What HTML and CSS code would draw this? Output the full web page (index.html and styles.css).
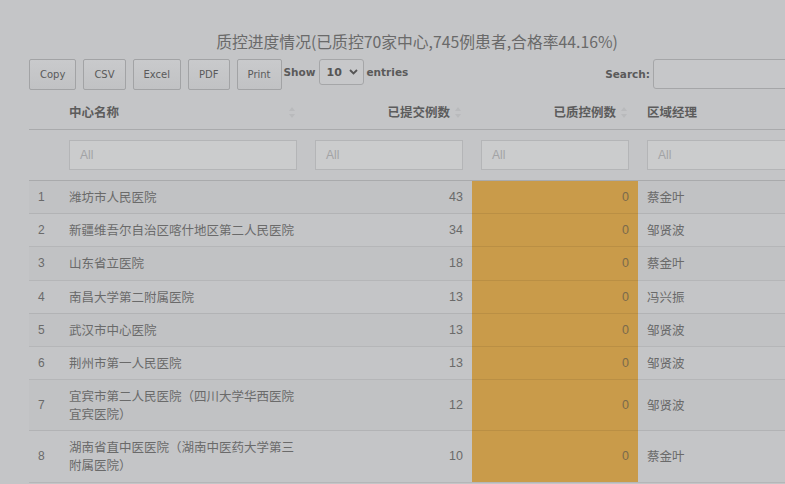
FILE: index.html
```html
<!DOCTYPE html>
<html lang="zh">
<head>
<meta charset="utf-8">
<title>质控进度情况</title>
<link rel="stylesheet" href="styles.css">
</head>
<body>
<div class="wrap">
  <h2 class="title">质控进度情况(已质控70家中心,745例患者,合格率44.16%)</h2>
  <div class="toolbar">
    <div class="buttons">
      <button class="btn">Copy</button>
      <button class="btn">CSV</button>
      <button class="btn">Excel</button>
      <button class="btn">PDF</button>
      <button class="btn">Print</button>
    </div>
    <div class="length">
      <span class="lbl">Show</span>
      <span class="select"><span class="val">10</span><svg class="chev" width="9" height="6" viewBox="0 0 9 6"><path d="M1 1l3.5 3.5L8 1" fill="none" stroke="#555" stroke-width="1.8"/></svg></span>
      <span class="lbl">entries</span>
    </div>
    <div class="search">
      <span class="lbl">Search:</span>
      <span class="search-input"></span>
    </div>
  </div>
  <table class="grid">
    <colgroup>
      <col class="c-idx"><col class="c-name"><col class="c-num"><col class="c-num"><col class="c-mgr">
    </colgroup>
    <thead>
      <tr class="head">
        <th></th>
        <th class="left">中心名称<span class="sort"><svg width="6" height="11" viewBox="0 0 6 11"><path d="M3 0L6 4H0z M3 11L0 7h6z" fill="#b9babc"/></svg></span></th>
        <th class="right">已提交例数<span class="sort"><svg width="6" height="11" viewBox="0 0 6 11"><path d="M3 0L6 4H0z M3 11L0 7h6z" fill="#b9babc"/></svg></span></th>
        <th class="right">已质控例数<span class="sort"><svg width="6" height="11" viewBox="0 0 6 11"><path d="M3 0L6 4H0z M3 11L0 7h6z" fill="#b9babc"/></svg></span></th>
        <th class="left">区域经理</th>
      </tr>
      <tr class="filters">
        <th></th>
        <th><div class="filter">All</div></th>
        <th><div class="filter">All</div></th>
        <th><div class="filter">All</div></th>
        <th><div class="filter">All</div></th>
      </tr>
    </thead>
    <tbody>
      <tr><td class="idx">1</td><td class="name">潍坊市人民医院</td><td class="num">43</td><td class="num qc">0</td><td class="mgr">蔡金叶</td></tr>
      <tr><td class="idx">2</td><td class="name">新疆维吾尔自治区喀什地区第二人民医院</td><td class="num">34</td><td class="num qc">0</td><td class="mgr">邹贤波</td></tr>
      <tr><td class="idx">3</td><td class="name">山东省立医院</td><td class="num">18</td><td class="num qc">0</td><td class="mgr">蔡金叶</td></tr>
      <tr><td class="idx">4</td><td class="name">南昌大学第二附属医院</td><td class="num">13</td><td class="num qc">0</td><td class="mgr">冯兴振</td></tr>
      <tr><td class="idx">5</td><td class="name">武汉市中心医院</td><td class="num">13</td><td class="num qc">0</td><td class="mgr">邹贤波</td></tr>
      <tr><td class="idx">6</td><td class="name">荆州市第一人民医院</td><td class="num">13</td><td class="num qc">0</td><td class="mgr">邹贤波</td></tr>
      <tr><td class="idx">7</td><td class="name">宜宾市第二人民医院（四川大学华西医院宜宾医院）</td><td class="num">12</td><td class="num qc">0</td><td class="mgr">邹贤波</td></tr>
      <tr><td class="idx">8</td><td class="name">湖南省直中医医院（湖南中医药大学第三附属医院）</td><td class="num">10</td><td class="num qc">0</td><td class="mgr">蔡金叶</td></tr>
    </tbody>
  </table>
</div>
</body>
</html>
```

FILE: styles.css
```css
html, body {
  margin: 0;
  padding: 0;
  overflow: hidden;
  background: #c4c5c7;
}
body {
  font-family: "Liberation Sans", "Noto Sans CJK SC", sans-serif;
  color: #686868;
}
.wrap {
  margin-left: 29px;
  width: 776px;
  padding-top: 30px;
}
.title {
  margin: 0;
  text-align: center;
  font-family: "Noto Sans CJK SC", sans-serif;
  font-weight: 400;
  font-size: 15.8px;
  line-height: 24px;
  color: #6a6a6a;
}
.toolbar {
  display: flex;
  align-items: flex-start;
  margin-top: 5px;
  height: 36px;
}
.buttons {
  display: flex;
  gap: 7px;
}
.btn {
  height: 31px;
  padding: 0 10px;
  font-family: "DejaVu Sans", sans-serif;
  font-size: 10px;
  color: #5a5a5a;
  background: linear-gradient(#c9cacc, #c1c2c4);
  border: 1px solid #a2a3a5;
  border-radius: 2px;
}
.length {
  display: flex;
  align-items: center;
  gap: 3px;
  margin-left: 2px;
}
.lbl {
  font-family: "DejaVu Sans", sans-serif;
  font-weight: 700;
  font-size: 10.5px;
  color: #5a5a5a;
}
.select {
  display: flex;
  align-items: center;
  justify-content: space-between;
  box-sizing: border-box;
  width: 45px;
  height: 26px;
  padding: 0 5px 0 7px;
  border: 1px solid #a5a6a8;
  border-radius: 3px;
  background: #c7c8ca;
  font-family: "DejaVu Sans", sans-serif;
  font-weight: 700;
  font-size: 11px;
  color: #555;
}
.search {
  margin-left: auto;
  display: flex;
  align-items: center;
  gap: 3px;
}
.search-input {
  display: block;
  box-sizing: border-box;
  width: 152px;
  height: 30px;
  border: 1px solid #a5a6a8;
  border-radius: 3px;
  background: #c6c7c9;
}
.grid {
  border-collapse: collapse;
  table-layout: fixed;
  width: 776px;
}
.c-idx { width: 31px; }
.c-name { width: 246px; }
.c-num { width: 166px; }
.c-mgr { width: 167px; }
.head th {
  position: relative;
  padding: 8px 9px;
  line-height: 18px;
  font-family: "Noto Sans CJK SC", sans-serif;
  font-weight: 700;
  font-size: 12.5px;
  color: #5c5c5c;
  border-bottom: 1px solid #a9aaac;
}
.head th.left { text-align: left; }
.head th.right { text-align: right; padding-right: 22px; }
.sort {
  position: absolute;
  right: 11px;
  top: 12px;
  line-height: 0;
}
.filters th {
  padding: 10px 9px;
  border-bottom: 1px solid #a9aaac;
}
.filter {
  box-sizing: border-box;
  height: 30px;
  padding-left: 10px;
  line-height: 28px;
  text-align: left;
  border: 1px solid #b4b5b7;
  background: #cbcccd;
  font-family: "Liberation Sans", sans-serif;
  font-weight: 400;
  font-size: 12px;
  color: #a2a3a5;
}
tbody td {
  padding: 7.1px 9px;
  line-height: 18px;
  font-size: 12.5px;
  vertical-align: middle;
  border-bottom: 1px solid rgba(0, 0, 0, 0.075);
  color: #6a6a6a;
}
tbody tr:nth-child(odd) td {
  background: #c1c2c4;
}
tbody tr td.qc {
  background: #c99b4a;
}
.idx {
  font-family: "Liberation Sans", sans-serif;
  font-size: 12px;
}
.name, .mgr {
  font-family: "Noto Sans CJK SC", sans-serif;
}
.num {
  text-align: right;
  font-family: "Liberation Sans", sans-serif;
}
.num.qc {
  color: #7a6a4c;
}
```
